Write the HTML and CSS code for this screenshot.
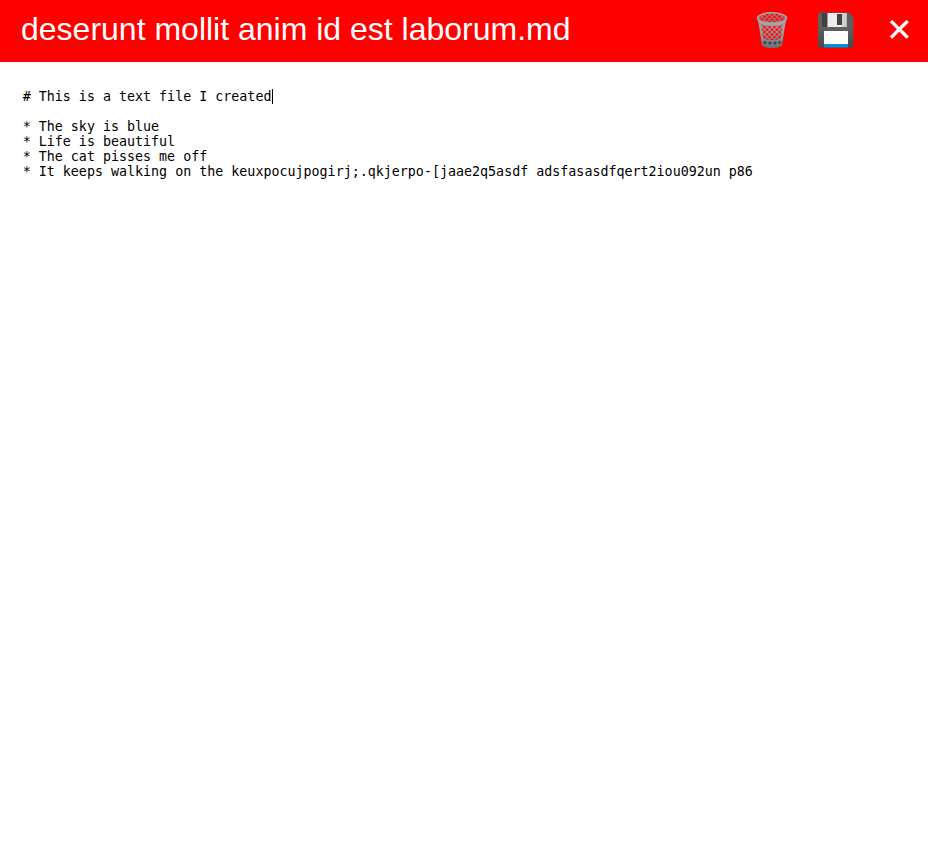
FILE: index.html
```html
<!DOCTYPE html>
<html lang="en">
<head>
<meta charset="utf-8">
<title>Editor</title>
<link rel="stylesheet" href="styles.css">
</head>
<body>
<header class="bar">
<h1 class="title">deserunt mollit anim id est laborum.md</h1>
<button class="action" aria-label="Delete">
<svg class="icon" viewBox="0 0 44 48">
<defs>
<linearGradient id="metal" x1="0" x2="0" y1="0" y2="1"><stop offset="0" stop-color="#a9abac"/><stop offset=".6" stop-color="#939899"/><stop offset="1" stop-color="#65737a"/></linearGradient>
<pattern id="holes" width="5" height="5" patternUnits="userSpaceOnUse" x="-.5" y="1"><path d="M2.500 .8L4.200 2.500 2.500 4.200 .8 2.500zM0-1.700L1.700 0 0 1.700-1.700 0zM5-1.700L6.700 0 5 1.700 3.300 0zM0 3.300L1.700 5 0 6.700-1.700 5zM5 3.300L6.700 5 5 6.700 3.300 5z" fill="#f00"/></pattern>
</defs>
<path d="M7 11.500L8.500 17 12 39Q14 42 22 42T32 39L35.500 17 37 11.500z" fill="url(#metal)"/>
<path d="M11.500 18.500Q22 21.500 32.500 18.500L31 32.500Q22 36 13 32.500z" fill="url(#holes)"/>
<path d="M15 34.500l2 2-2 2-2-2zm5 .5l2 2-2 2-2-2zm5 0l2 2-2 2-2-2zm4.500-.5l2 2-2 2-2-2z" fill="#3f494c"/>
<ellipse cx="22" cy="12" rx="14.500" ry="5.200" fill="#a47b7e" stroke="#a5a9aa" stroke-width="1.400"/>
<ellipse cx="22" cy="12" rx="12.500" ry="4.300" fill="url(#holes)"/>
</svg>
</button>
<button class="action" aria-label="Save">
<svg class="icon" viewBox="0 0 44 48">
<defs><linearGradient id="case" x1="0" x2="0" y1="0" y2="1"><stop offset="0" stop-color="#5a5a5a"/><stop offset=".4" stop-color="#626262"/><stop offset="1" stop-color="#484848"/></linearGradient></defs>
<path d="M5.500 6.500H35L39.500 11V40.500Q39.500 41.500 38.500 41.500H5.500Q4 41.500 4 40V8Q4 6.500 5.500 6.500z" fill="url(#case)"/>
<path d="M8 7H13.500V21H8z" fill="#414141"/>
<path d="M13.500 7H32.500V21H13.500z" fill="#ededed"/>
<path d="M28 7H32.500V21H28z" fill="#d0d0d0"/>
<path d="M23 8H28V19H23z" fill="#434343"/>
<path d="M10 25H34V38H10z" fill="#fff"/>
<path d="M10 38H34V41.500H10z" fill="#0290d8"/>
</svg>
</button>
<button class="action" aria-label="Close">✕</button>
</header>
<pre class="editor"># This is a text file I created<span class="caret"></span>

* The sky is blue
* Life is beautiful
* The cat pisses me off
* It keeps walking on the keuxpocujpogirj;.qkjerpo-[jaae2q5asdf adsfasasdfqert2iou092un p86</pre>
</body>
</html>
```
FILE: styles.css
```css
body { margin: 0; background: #fff; }
.bar { display: flex; align-items: flex-start; height: 62px; background: #f00; color: #fff; }
.title { flex: 1; margin: 0; padding-left: 21px; font: 32px/59px "Liberation Sans", sans-serif; }
.action { width: 64px; padding: 0; border: 0; background: none; color: #fff; font: 32px/60px "Liberation Sans", sans-serif; }
.action:last-child { width: 64px; margin-right: -4px; text-indent: -0.4px; }
.icon { display: block; width: 44px; height: 48px; margin: 6px 10px 0; }
.editor { margin: 27px 22.7px; font: 13.333px/15px "DejaVu Sans Mono", monospace; color: #000; }
.caret { display: inline-block; width: 1px; height: 15px; margin-left: 1px; margin-right: -2px; background: #000; vertical-align: top; }
```
